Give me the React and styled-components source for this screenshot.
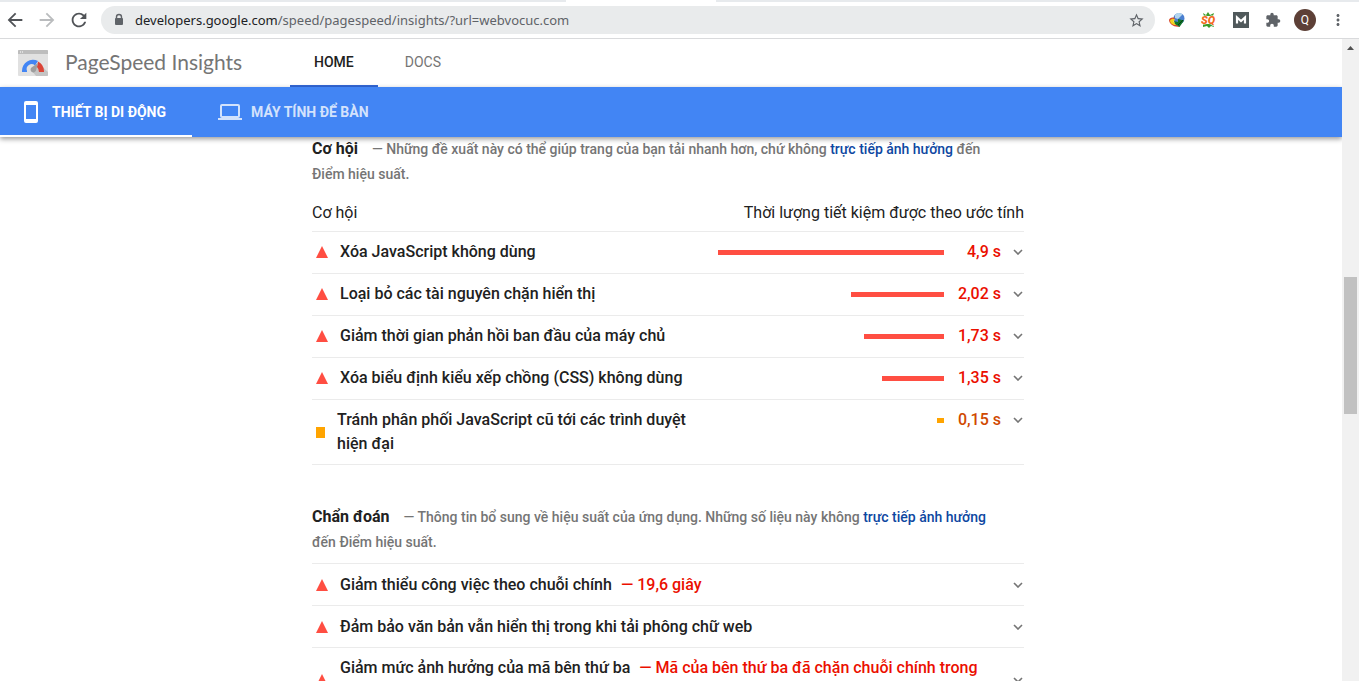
import React from "react";
import styled, { createGlobalStyle } from "styled-components";
import { MdArrowBack, MdArrowForward, MdRefresh, MdStarBorder, MdExtension, MdMoreVert } from "react-icons/md";

const GlobalStyle = createGlobalStyle`
  * {
    box-sizing: border-box;
  }
  body {
    margin: 0;
    background: #fff;
    color: #212121;
    font-family: Roboto, "Noto Sans", sans-serif;
  }
  button {
    padding: 0;
    border: 0;
    background: none;
    color: inherit;
    font: inherit;
    text-align: left;
    cursor: pointer;
  }
  svg {
    display: block;
    flex-shrink: 0;
  }
`;

const Window = styled.div`
  display: flex;
  flex-direction: column;
  height: 100vh;
  overflow: hidden;
`;

/* browser bar */

const TabStrip = styled.div`
  display: flex;
  gap: 150px;
  flex-shrink: 0;
  height: 2px;
`;

const TabStripPart = styled.div`
  flex: ${(props) => props.$grow} 1 0;
  background: #e7eaed;
`;

const Toolbar = styled.div`
  display: flex;
  align-items: center;
  flex-shrink: 0;
  height: 37px;
  padding: 0 12px 0 4px;
  border-bottom: 1px solid #d9dadc;
`;

const NavButtons = styled.div`
  display: flex;
  gap: 10px;
`;

const NavButton = styled.button`
  color: ${(props) => (props.disabled ? "#babcbe" : "#505357")};
`;

const AddressBar = styled.div`
  display: flex;
  align-items: center;
  flex: 1;
  height: 28px;
  margin-left: 11px;
  padding: 0 10px 0 11px;
  border-radius: 14px;
  background: #e9ebec;
  color: #5f6368;
`;

const Url = styled.div`
  flex: 1;
  margin-left: 9px;
  font-family: "Noto Sans", sans-serif;
  font-size: 13px;
  line-height: 20px;

  span {
    color: #202124;
  }
`;

const Extensions = styled.div`
  display: flex;
  align-items: center;
  gap: 16px;
  margin-left: 14px;
  color: #5f6368;
`;

const Avatar = styled.button`
  width: 22px;
  height: 22px;
  margin: 0 -3px;
  border-radius: 50%;
  background: #5d4037;
  color: #fff;
  font-size: 12px;
  line-height: 22px;
  text-align: center;
`;

/* page */

const Viewport = styled.div`
  display: flex;
  flex: 1;
  min-height: 0;
`;

const Page = styled.div`
  flex: 1;
  min-width: 0;
  overflow: hidden;
`;

const Header = styled.header`
  display: flex;
  align-items: center;
  height: 48px;
  padding-left: 18px;
`;

const ProductName = styled.a`
  width: 225px;
  margin-left: 17px;
  padding-bottom: 2px;
  color: #757575;
  font-family: Lato, "Open Sans", sans-serif;
  font-size: 21px;
  line-height: 24px;
  text-decoration: none;
`;

const HeaderNav = styled.nav`
  display: flex;
  gap: 3px;
`;

const HeaderLink = styled.a`
  height: 48px;
  padding: 0 24px;
  border-bottom: 2px solid ${(props) => (props.$active ? "#3367d6" : "transparent")};
  color: ${(props) => (props.$active ? "#212121" : "#757575")};
  font-size: 14px;
  font-weight: ${(props) => (props.$active ? 500 : 400)};
  line-height: 46px;
  text-decoration: none;
`;

const DeviceTabs = styled.div`
  display: flex;
  position: relative;
  height: 50px;
  background: #4285f4;
  box-shadow: 0 2px 5px rgba(0, 0, 0, 0.4);
`;

const DeviceTab = styled.button`
  display: flex;
  align-items: center;
  gap: 9px;
  padding: 2px 26px 0 ${(props) => (props.$active ? 19 : 26)}px;
  border-bottom: 2px solid ${(props) => (props.$active ? "#fff" : "transparent")};
  color: ${(props) => (props.$active ? "#fff" : "#d3e2fc")};
  font-size: 14px;
  font-weight: 700;
  line-height: 20px;
`;

const Content = styled.main`
  max-width: 718px;
  margin: 0 auto;
  padding-right: 6px;
`;

const Section = styled.section`
  margin-bottom: 40px;
`;

const SectionHeader = styled.div`
  padding: 0 24px 8px 0;
  color: #757575;
  font-size: 14px;
  font-weight: 500;
  line-height: 25px;

  a {
    color: #0d47a1;
    text-decoration: none;
  }
`;

const SectionTitle = styled.h2`
  display: inline;
  margin: 0 14px 0 0;
  color: #212121;
  font-size: 16px;
  font-weight: 700;
  line-height: 24px;
`;

const ColumnNames = styled.div`
  display: flex;
  justify-content: space-between;
  padding: 6px 0;
  font-size: 16px;
  line-height: 24px;
`;

const AuditList = styled.div`
  border-bottom: 1px solid #ebebeb;
`;

const Audit = styled.button`
  display: flex;
  align-items: ${(props) => (props.$centered ? "center" : "flex-start")};
  width: 100%;
  min-height: 42px;
  padding: 8px 1px 8px 4px;
  border-top: 1px solid #ebebeb;
  font-size: 16px;
  font-weight: 500;
  line-height: 24px;
`;

const AuditTitle = styled.span`
  display: flex;
  align-items: center;
  gap: 12px;
  flex: 1;
  padding-right: ${(props) => (props.$wide ? 24 : 12)}px;
`;

const AuditDetail = styled.span`
  margin-left: 5px;
  color: #eb0f00;
`;

const Triangle = styled.span`
  flex-shrink: 0;
  border: 6px solid transparent;
  border-top: 0;
  border-bottom: 12px solid #ff4e42;
`;

const Square = styled.span`
  flex-shrink: 0;
  width: 9px;
  height: 11px;
  background: #ffa400;
`;

const BarTrack = styled.span`
  display: flex;
  align-items: center;
  justify-content: flex-end;
  width: 226px;
  height: 24px;
`;

const Bar = styled.span`
  height: 5px;
  background: ${(props) => (props.$average ? "#ffa400" : "#ff4e42")};
`;

const Saving = styled.span`
  width: 57px;
  color: ${(props) => (props.$average ? "#d04900" : "#eb0f00")};
  text-align: right;
`;

const ChevronBox = styled.span`
  display: flex;
  align-items: center;
  height: 24px;
  margin-left: 12px;
`;

const Scrollbar = styled.div`
  display: flex;
  flex-direction: column;
  width: 17px;
  padding: 0 2px;
  background: #f1f1f1;
`;

const ScrollArrow = styled.div`
  display: flex;
  align-items: center;
  justify-content: center;
  height: 17px;
`;

const ScrollSpace = styled.div`
  flex: ${(props) => props.$grow} 1 0;
  background: ${(props) => (props.$thumb ? "#c1c1c1" : "transparent")};
`;

const LockIcon = () => (
  <svg width="14" height="14" viewBox="0 0 14 14">
    <path d="M4.5 6V4a2.5 2.5 0 0 1 5 0v2" fill="none" stroke="currentColor" strokeWidth="1.4" />
    <rect x="3" y="5" width="8" height="7" rx="1" fill="currentColor" />
  </svg>
);

const DownloadIcon = () => (
  <svg width="16" height="16" viewBox="0 0 16 16">
    <circle cx="10" cy="6.5" r="5.5" fill="#4a7fd0" />
    <path d="M6 3c2-2.500 5-2.500 7.500-.5L11 5 9 7 6 6z" fill="#b4d6ee" />
    <path d="M0 8c.5-2 3-3 6-2L3 9l3 3 5 2.500C5 15.500.5 12.500 0 8z" fill="#d9472b" />
    <path d="M1 8.500c1.500-2 3.500-2 5-1L4.500 9.500 8 13c-4 .5-7-2-7-4.500z" fill="#f2d21f" />
    <path d="M5 9l4 1V7l6 1.500-4.500 6.500L6 12z" fill="#11752a" />
    <path d="M9 13l5-5" stroke="#07400f" />
  </svg>
);

const SqIcon = () => (
  <svg width="16" height="16" viewBox="0 0 16 16">
    <path d="M2 1l3 2 2-3 2 3 4-2-1 3H3zM2 12h10l1 3-3-1-2 2-2-2-4 1z" fill="#3c9b28" />
    <text x="0" y="12" fill="#f4691b" stroke="#fff" strokeWidth="1" paintOrder="stroke" fontFamily="Roboto, sans-serif" fontSize="11" fontStyle="italic" fontWeight="900">
      SQ
    </text>
  </svg>
);

const MozIcon = () => (
  <svg width="16" height="16" viewBox="0 0 16 16">
    <path d="M0 0h16v16H0z" fill="#50595b" />
    <path d="M4 11.500V5.500l4 3.500 4-3.500v6" fill="none" stroke="#fff" strokeWidth="2.200" />
  </svg>
);

const SpeedLogo = () => (
  <svg width="30" height="26" viewBox="0 0 30 26">
    <rect width="30" height="26" rx="1" fill="#e1e1e1" />
    <path d="M0 4V1a1 1 0 0 1 1-1h28a1 1 0 0 1 1 1v3z" fill="#bdbdbd" />
    <path d="M2 2h1M4 2h1" stroke="#fff" />
    <path d="M14 21l7-7 9 8v3a1 1 0 0 1-1 1H18z" fill="#c4c4c4" />
    <path d="M4 22v-1a11 11 0 0 1 16-10l-3 4.500A5 5 0 0 0 9 21v1z" fill="#4285f4" />
    <path d="M20 11.500a11 11 0 0 1 6 9.500v1h-5a7 7 0 0 0-2-5z" fill="#db4437" />
    <path d="M20 13l-2 7.500a2.800 2.800 0 1 1-4.500-3z" fill="#9e9e9e" />
  </svg>
);

const PhoneIcon = () => (
  <svg width="24" height="24" viewBox="0 0 24 24">
    <path fillRule="evenodd" d="M7 1h10a2 2 0 0 1 2 2v18a2 2 0 0 1-2 2H7a2 2 0 0 1-2-2V3a2 2 0 0 1 2-2zm0 4v14h10V5z" fill="currentColor" />
  </svg>
);

const LaptopIcon = () => (
  <svg width="24" height="24" viewBox="0 0 24 24">
    <path fillRule="evenodd" d="M4 4h16a2 2 0 0 1 2 2v10a2 2 0 0 1-2 2h4v2H0v-2h4a2 2 0 0 1-2-2V6a2 2 0 0 1 2-2zm0 2v10h16V6z" fill="currentColor" />
  </svg>
);

const Chevron = () => (
  <ChevronBox>
    <svg width="10" height="6" viewBox="0 0 10 6">
      <path d="M1 1l4 4 4-4" fill="none" stroke="#757575" strokeWidth="1.6" />
    </svg>
  </ChevronBox>
);

const opportunities = [
  { title: "Xóa JavaScript không dùng", seconds: 4.9 },
  { title: "Loại bỏ các tài nguyên chặn hiển thị", seconds: 2.02 },
  { title: "Giảm thời gian phản hồi ban đầu của máy chủ", seconds: 1.73 },
  { title: "Xóa biểu định kiểu xếp chồng (CSS) không dùng", seconds: 1.35 },
  { title: "Tránh phân phối JavaScript cũ tới các trình duyệt hiện đại", seconds: 0.15, average: true },
];

const diagnostics = [
  { title: "Giảm thiểu công việc theo chuỗi chính", detail: "19,6 giây" },
  { title: "Đảm bảo văn bản vẫn hiển thị trong khi tải phông chữ web" },
  { title: "Giảm mức ảnh hưởng của mã bên thứ ba", detail: "Mã của bên thứ ba đã chặn chuỗi chính trong 1.350 mili giây" },
];

const maxSeconds = Math.max(...opportunities.map((item) => item.seconds));

const BrowserBar = () => (
  <>
    <TabStrip>
      <TabStripPart $grow={566} />
      <TabStripPart $grow={643} />
    </TabStrip>
    <Toolbar>
      <NavButtons>
        <NavButton aria-label="Back">
          <MdArrowBack size={22} />
        </NavButton>
        <NavButton aria-label="Forward" disabled>
          <MdArrowForward size={22} />
        </NavButton>
        <NavButton aria-label="Reload">
          <MdRefresh size={22} />
        </NavButton>
      </NavButtons>
      <AddressBar>
        <LockIcon />
        <Url>
          <span>developers.google.com</span>/speed/pagespeed/insights/?url=webvocuc.com
        </Url>
        <MdStarBorder size={17} />
      </AddressBar>
      <Extensions>
        <DownloadIcon />
        <SqIcon />
        <MozIcon />
        <MdExtension size={16} />
        <Avatar>Q</Avatar>
        <MdMoreVert size={18} />
      </Extensions>
    </Toolbar>
  </>
);

const App = () => (
  <Window>
    <GlobalStyle />
    <BrowserBar />
    <Viewport>
      <Page>
        <Header>
          <SpeedLogo />
          <ProductName href="#">PageSpeed Insights</ProductName>
          <HeaderNav>
            <HeaderLink href="#" $active>
              HOME
            </HeaderLink>
            <HeaderLink href="#">DOCS</HeaderLink>
          </HeaderNav>
        </Header>
        <DeviceTabs>
          <DeviceTab $active>
            <PhoneIcon />
            THIẾT BỊ DI ĐỘNG
          </DeviceTab>
          <DeviceTab>
            <LaptopIcon />
            MÁY TÍNH ĐỂ BÀN
          </DeviceTab>
        </DeviceTabs>
        <Content>
          <Section>
            <SectionHeader>
              <SectionTitle>Cơ hội</SectionTitle>— Những đề xuất này có thể giúp trang của bạn tải nhanh hơn, chứ không{" "}
              <a href="#">trực tiếp ảnh hưởng</a> đến Điểm hiệu suất.
            </SectionHeader>
            <ColumnNames>
              <span>Cơ hội</span>
              <span>Thời lượng tiết kiệm được theo ước tính</span>
            </ColumnNames>
            <AuditList>
              {opportunities.map((item) => (
                <Audit key={item.title} aria-expanded="false">
                  <AuditTitle $wide>
                    {item.average ? <Square /> : <Triangle />}
                    <span>{item.title}</span>
                  </AuditTitle>
                  <BarTrack>
                    <Bar $average={item.average} style={{ width: `${(item.seconds / maxSeconds) * 100}%` }} />
                  </BarTrack>
                  <Saving $average={item.average}>{String(item.seconds).replace(".", ",")} s</Saving>
                  <Chevron />
                </Audit>
              ))}
            </AuditList>
          </Section>
          <Section>
            <SectionHeader>
              <SectionTitle>Chẩn đoán</SectionTitle>— Thông tin bổ sung về hiệu suất của ứng dụng. Những số liệu này không{" "}
              <a href="#">trực tiếp ảnh hưởng</a> đến Điểm hiệu suất.
            </SectionHeader>
            <AuditList>
              {diagnostics.map((item) => (
                <Audit key={item.title} $centered aria-expanded="false">
                  <AuditTitle>
                    <Triangle />
                    <span>
                      {item.title} {item.detail && <AuditDetail>— {item.detail}</AuditDetail>}
                    </span>
                  </AuditTitle>
                  <Chevron />
                </Audit>
              ))}
            </AuditList>
          </Section>
        </Content>
      </Page>
      <Scrollbar>
        <ScrollArrow>
          <svg width="7" height="4" viewBox="0 0 7 4">
            <path d="M0 4l3.5-4L7 4z" fill="#505050" />
          </svg>
        </ScrollArrow>
        <ScrollSpace $grow={221} />
        <ScrollSpace $grow={137} $thumb />
        <ScrollSpace $grow={267} />
      </Scrollbar>
    </Viewport>
  </Window>
);

export default App;
